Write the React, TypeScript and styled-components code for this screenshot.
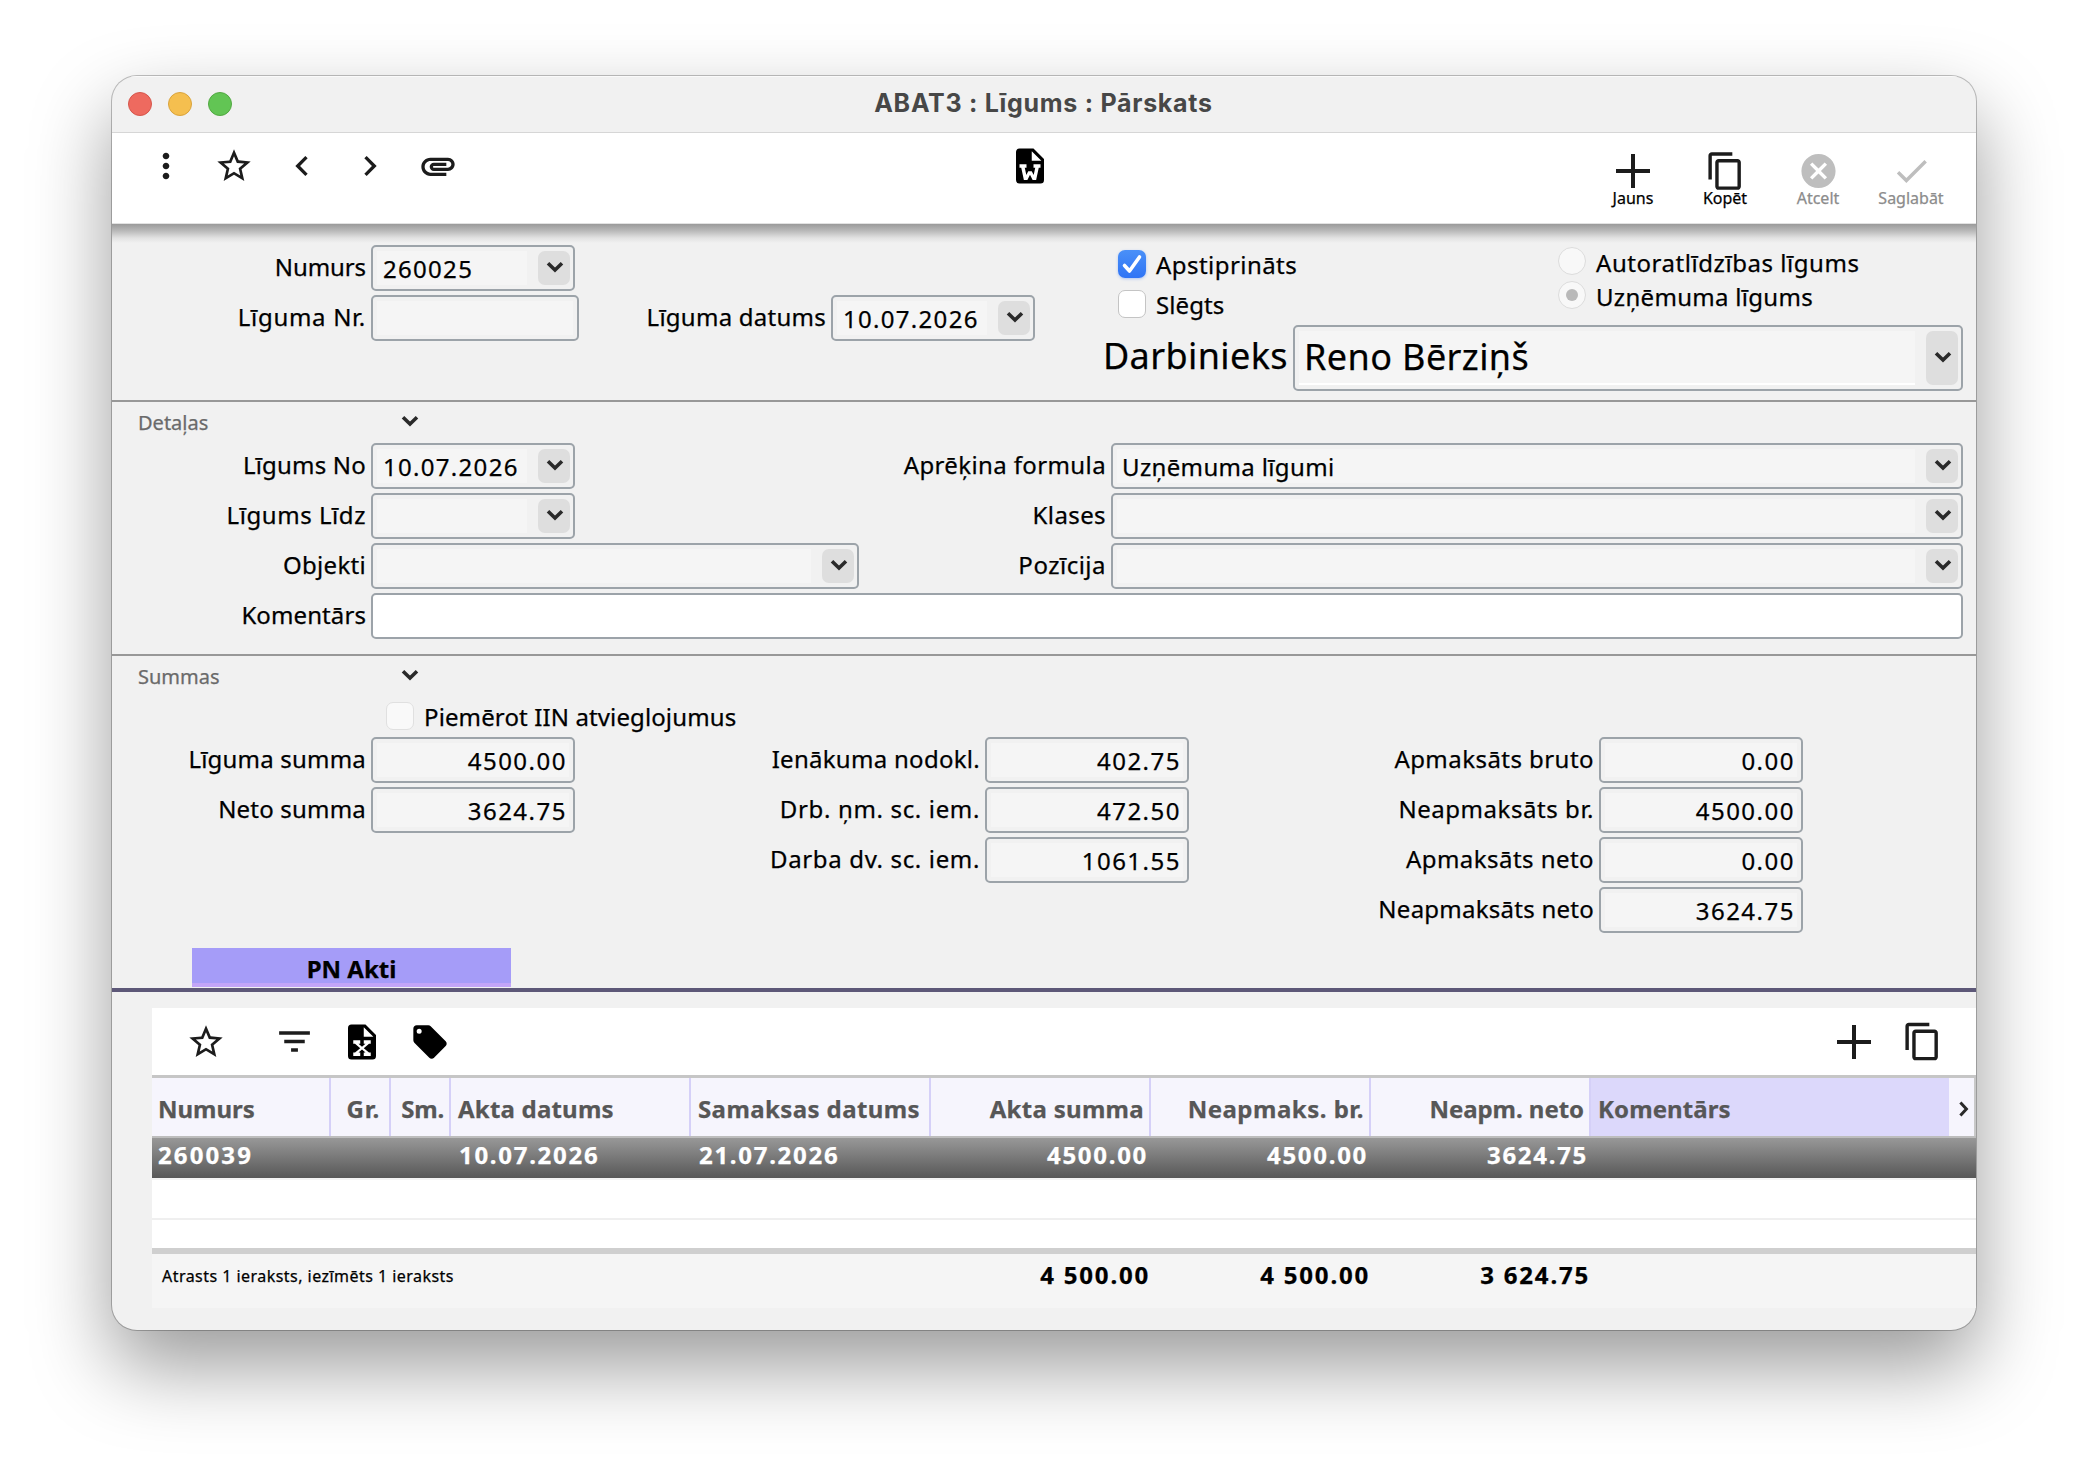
import React from "react";
import styled, { createGlobalStyle, css } from "styled-components";
import {
  MdMoreVert,
  MdStarOutline,
  MdChevronLeft,
  MdChevronRight,
  MdAttachment,
  MdContentCopy,
  MdCancel,
  MdCheck,
  MdFilterList,
} from "react-icons/md";

const Global = createGlobalStyle`
  * { box-sizing: border-box; }
  body {
    margin: 0;
    background: #fff;
    color: #000;
    font-family: "Noto Sans", "Open Sans", sans-serif;
    font-size: 24px;
    -webkit-text-stroke: 0.25px currentColor;
  }
  svg { display: block; }
`;

const Desktop = styled.div`
  width: 2088px;
  height: 1478px;
  padding: 76px 112px 148px;
  overflow: hidden;
`;

const Window = styled.main`
  height: 1254px;
  display: flex;
  flex-direction: column;
  overflow: hidden;
  border-radius: 25px;
  background: #f1f1f1;
  box-shadow: 0 0 0 1px rgba(0, 0, 0, 0.24), 0 36px 80px rgba(0, 0, 0, 0.4);
`;

const TitleBar = styled.header`
  height: 57px;
  flex: none;
  display: grid;
  grid-template-columns: 1fr auto 1fr;
  align-items: center;
  padding: 0 16px;
  border-bottom: 1px solid #d6d6d6;
  box-shadow: inset 0 1px 0 #fafafa;
`;

const Lights = styled.div`
  display: flex;
  gap: 16px;
`;

const Light = styled.span<{ $fill: string; $edge: string }>`
  width: 24px;
  height: 24px;
  border-radius: 50%;
  background: ${(p) => p.$fill};
  border: 1px solid ${(p) => p.$edge};
`;

const Title = styled.h1`
  margin: 0;
  padding: 0 1px 2px 0;
  font: bold 25px/30px Inter, "Liberation Sans", sans-serif;
  letter-spacing: 0.72px;
  color: #474747;
  -webkit-text-stroke: 0;
`;

const Toolbar = styled.nav`
  height: 91px;
  flex: none;
  display: flex;
  background: #fff;
  border-bottom: 1px solid #e2e2e2;
`;

const ToolGroup = styled.div<{ $left: number; $top?: number }>`
  display: flex;
  gap: 28px;
  padding: ${(p) => p.$top ?? 13}px 0 0 ${(p) => p.$left}px;
  color: #1c1c1c;
`;

const Actions = styled.div`
  display: flex;
  align-items: flex-start;
  margin-left: auto;
  padding: 17px 19px 0 0;
`;

const Action = styled.button<{ $off?: boolean; $width: number }>`
  width: ${(p) => p.$width}px;
  padding: 0;
  border: 0;
  background: none;
  display: flex;
  flex-direction: column;
  align-items: center;
  font: 16px/20px "Noto Sans", sans-serif;
  color: ${(p) => (p.$off ? "#8c8c8c" : "#000")};
  svg {
    height: 42px;
    margin-bottom: -4px;
    color: ${(p) => (p.$off ? "#bebebe" : "#1c1c1c")};
  }
`;

const Section = styled.section<{ $height: number; $shaded?: boolean }>`
  height: ${(p) => p.$height}px;
  flex: none;
  border-bottom: ${(p) => (p.$shaded === undefined ? "0" : "2px solid #989898")};
  ${(p) =>
    p.$shaded &&
    css`
      background: linear-gradient(#9a9a9a, #bababa 7px, #e2e2e2 14px, #f1f1f1 19px);
      padding-top: 21px;
      display: flex;
    `}
`;

const Stack = styled.div`
  display: flex;
  flex-direction: column;
  gap: 4px;
`;

const Row = styled.div`
  display: flex;
`;

const Label = styled.label<{ $width: number; $ls?: number }>`
  width: ${(p) => p.$width}px;
  height: 46px;
  line-height: 43px;
  padding-right: 5px;
  text-align: right;
  white-space: nowrap;
  letter-spacing: ${(p) => p.$ls ?? 0.1}px;
`;

const FieldBox = styled.div<{ $width: number; $tall?: boolean; $white?: boolean }>`
  width: ${(p) => p.$width}px;
  height: ${(p) => (p.$tall ? 66 : 46)}px;
  display: flex;
  gap: 11px;
  padding: 4px;
  border: 2px solid #9ca3a9;
  border-radius: 5px;
  background: ${(p) => (p.$white ? "#fff" : "#f1f1f1")};
`;

const Value = styled.div<{ $right?: boolean; $tall?: boolean; $white?: boolean; $ls: number }>`
  flex: 1;
  overflow: hidden;
  padding: 0 ${(p) => (p.$right ? 2 : p.$ls < 1 ? 5 : 6)}px;
  text-align: ${(p) => (p.$right ? "right" : "left")};
  background: ${(p) => (p.$white ? "#fff" : "#f5f5f5")};
  border-bottom: ${(p) => (p.$tall ? "2px solid #fff" : "0")};
  white-space: nowrap;
  font-size: ${(p) => (p.$tall ? 36 : 24)}px;
  line-height: ${(p) => (p.$tall ? 52 : 36)}px;
  letter-spacing: ${(p) => p.$ls}px;
`;

const DropButton = styled.span`
  width: 32px;
  flex: none;
  display: flex;
  align-items: center;
  justify-content: center;
  border-radius: 7px;
  background: #dedede;
  color: #2a2a2a;
  margin-right: -1px;
  padding: 0 0 3px 1px;
`;

const Right = styled.div`
  width: 928px;
  display: flex;
  flex-direction: column;
`;

const Options = styled.div`
  height: 80px;
  display: flex;
  padding-left: 83px;
`;

const OptionList = styled.div<{ $width?: number; $gap: number; $top: number }>`
  width: ${(p) => (p.$width ? p.$width + "px" : "auto")};
  display: flex;
  flex-direction: column;
  gap: ${(p) => p.$gap}px;
  padding-top: ${(p) => p.$top}px;
`;

const Option = styled.label<{ $ls?: number; $line?: number }>`
  height: 28px;
  display: flex;
  gap: 10px;
  line-height: ${(p) => p.$line ?? 30}px;
  white-space: nowrap;
  letter-spacing: ${(p) => p.$ls ?? 0}px;
`;

const Check = styled.span<{ $on?: boolean; $dim?: boolean }>`
  width: 28px;
  height: 28px;
  border-radius: 7px;
  display: flex;
  align-items: center;
  justify-content: center;
  background: ${(p) => (p.$on ? "linear-gradient(#4a90f8, #2f74f5)" : p.$dim ? "#f9f9f9" : "#fff")};
  border: ${(p) => (p.$on ? "0" : p.$dim ? "1px solid #e0e0e0" : "1px solid #c4c4c4")};
  box-shadow: ${(p) => (p.$on ? "0 1px 3px rgba(47,116,245,.35)" : "none")};
`;

const Radio = styled.span`
  width: 28px;
  height: 28px;
  border-radius: 50%;
  display: flex;
  align-items: center;
  justify-content: center;
  background: #f8f8f8;
  border: 1px solid #dcdcdc;
`;

const RadioDot = styled.i`
  width: 12px;
  height: 12px;
  border-radius: 50%;
  background: #b9b9b9;
`;

const BigLabel = styled.label`
  width: 258px;
  padding-right: 5px;
  text-align: right;
  font-size: 36px;
  line-height: 61px;
  letter-spacing: 0.4px;
`;

const GroupHeader = styled.div`
  height: 41px;
  display: flex;
  align-items: center;
  padding-left: 26px;
  font-size: 20px;
  color: #6a6a6a;
  svg { color: #2a2a2a; margin-top: -3px; }
`;

const GroupName = styled.span`
  width: 263px;
`;

const CheckLine = styled.div`
  height: 40px;
  padding: 5px 0 0 274px;
`;

const TabStrip = styled.div`
  height: 44px;
  flex: none;
  padding-left: 80px;
  border-bottom: 4px solid #5d5878;
`;

const Tab = styled.div`
  width: 319px;
  height: 39px;
  border-bottom: 4px solid #c2a5f8;
  background: #a59cf8;
  text-align: center;
  font-weight: bold;
  line-height: 42px;
`;

const Matrix = styled.section`
  flex: none;
  margin: 16px 0 22px 40px;
  height: 300px;
  background: #fff;
`;

const MatrixTools = styled.div`
  height: 70px;
  display: flex;
  align-items: center;
  padding: 0 33px 0 34px;
  border-bottom: 3px solid #c6c6c6;
  color: #1c1c1c;
`;

const Tool = styled.span<{ $gap?: number; $dark?: boolean }>`
  margin-left: ${(p) => p.$gap ?? 0}px;
  color: ${(p) => (p.$dark ? "#000" : "inherit")};
`;

const Spacer = styled.span`
  flex: 1;
`;

const grid = css`
  display: grid;
  grid-template-columns: 179px 60px 60px 240px 240px 220px 220px 220px 358px 27px;
`;

const HeadRow = styled.div`
  ${grid}
  height: 60px;
  border-bottom: 2px solid #bdbdbd;
  font-weight: bold;
  color: #575757;
`;

const HeadCell = styled.div<{ $right?: boolean; $active?: boolean; $ls?: number; $pad?: number }>`
  padding: 0 ${(p) => p.$pad ?? 5}px 0 7px;
  line-height: 61px;
  overflow: hidden;
  white-space: nowrap;
  text-align: ${(p) => (p.$right ? "right" : "left")};
  background: ${(p) => (p.$active ? "#dcd8fb" : "#f6f5fd")};
  border-right: 2px solid ${(p) => (p.$active ? "#dcd8fb" : "#d5d0f8")};
  letter-spacing: ${(p) => p.$ls ?? 0}px;
  &:first-child { padding-left: 6px; }
`;

const MoreCell = styled.div`
  display: flex;
  align-items: center;
  justify-content: center;
  padding: 3px 0 0 3px;
  background: #f6f5fd;
  color: #2a2a2a;
  border-right: 2px solid #c8c8c8;
`;

const SelectedRow = styled.div`
  ${grid}
  height: 42px;
  border-bottom: 2px solid #f3f3f3;
  background: linear-gradient(#989898, #575757);
  background-clip: padding-box;
  color: #fff;
  font-weight: bold;
  line-height: 33px;
`;

const Cell = styled.div<{ $right?: boolean }>`
  padding: 0 3px 0 8px;
  white-space: nowrap;
  text-align: ${(p) => (p.$right ? "right" : "left")};
  letter-spacing: 1.7px;
  &:first-child { padding-left: 6px; letter-spacing: 2.1px; }
`;

const EmptyRow = styled.div<{ $height: number; $last?: boolean }>`
  height: ${(p) => p.$height}px;
  border-bottom: ${(p) => (p.$last ? "6px solid #cfcfcf" : "2px solid #efefef")};
`;

const Totals = styled.div`
  display: grid;
  grid-template-columns: 778px 220px 220px 220px 1fr;
  height: 54px;
  background: #f5f5f5;
  font-weight: bold;
  line-height: 41px;
`;

const Note = styled.span`
  padding-left: 10px;
  font-size: 16px;
  font-weight: normal;
  line-height: 45px;
  letter-spacing: 0.46px;
`;

const Total = styled.span`
  text-align: right;
  letter-spacing: 1.8px;
`;

const ChevronDown = () => (
  <svg width="18" height="12" viewBox="0 0 18 12">
    <path d="M2 2.2L9 9L16 2.2" stroke="currentColor" strokeWidth="3.6" fill="none" />
  </svg>
);

const SmallChevronRight = () => (
  <svg width="11" height="18" viewBox="0 0 11 18">
    <path d="M2.4 2.5L8.4 9L2.4 15.5" stroke="currentColor" strokeWidth="3" fill="none" />
  </svg>
);

const PlusIcon = () => (
  <svg width="40" height="42" viewBox="0 0 40 42">
    <path d="M20 4V38M3 21H37" stroke="currentColor" strokeWidth="4" fill="none" />
  </svg>
);

const WordIcon = () => (
  <svg width="42" height="42" viewBox="0 0 24 24" fill="currentColor">
    <path d="M6,2H14L20,8V20A2,2 0 0,1 18,22H6A2,2 0 0,1 4,20V4A2,2 0 0,1 6,2M13,3.5V9H18.5L13,3.5M7,13L8.5,20H10.5L12,17L13.5,20H15.5L17,13H18V11H14V13H15L14.1,17.2L13,15V15H11V15L9.9,17.2L9,13H10V11H6V13H7Z" />
  </svg>
);

const ExcelIcon = () => (
  <svg width="42" height="42" viewBox="0 0 24 24" fill="currentColor">
    <path d="M6,2H14L20,8V20A2,2 0 0,1 18,22H6A2,2 0 0,1 4,20V4A2,2 0 0,1 6,2M13,3.5V9H18.5L13,3.5M17,11H13V13H14L12,14.67L10,13H11V11H7V13H8L11,15.5L8,18H7V20H11V18H10L12,16.33L14,18H13V20H17V18H16L13,15.5L16,13H17V11Z" />
  </svg>
);

const TagIcon = () => (
  <svg width="40" height="40" viewBox="0 0 24 24" fill="currentColor">
    <path d="M5.5,7A1.5,1.5 0 0,1 4,5.5A1.5,1.5 0 0,1 5.5,4A1.5,1.5 0 0,1 7,5.5A1.5,1.5 0 0,1 5.5,7M21.41,11.58L12.41,2.58C12.05,2.22 11.55,2 11,2H4C2.89,2 2,2.89 2,4V11C2,11.55 2.22,12.05 2.59,12.41L11.58,21.41C11.95,21.77 12.45,22 13,22C13.55,22 14.05,21.77 14.41,21.41L21.41,14.41C21.78,14.05 22,13.55 22,13C22,12.44 21.77,11.94 21.41,11.58Z" />
  </svg>
);

const TickIcon = () => (
  <svg width="28" height="28" viewBox="0 0 28 28">
    <path
      d="M6.5 15.5L11.5 21L21.5 7"
      fill="none"
      stroke="#fff"
      strokeWidth="3.6"
      strokeLinecap="round"
      strokeLinejoin="round"
    />
  </svg>
);

const Field = ({
  width,
  value = "",
  drop,
  right,
  tall,
  white,
  ls = 1.3,
}: {
  width: number;
  value?: string;
  drop?: boolean;
  right?: boolean;
  tall?: boolean;
  white?: boolean;
  ls?: number;
}) => (
  <FieldBox $width={width} $tall={tall} $white={white}>
    <Value $right={right} $tall={tall} $white={white} $ls={ls}>
      {value}
    </Value>
    {drop && (
      <DropButton>
        <ChevronDown />
      </DropButton>
    )}
  </FieldBox>
);

type SumRow = [label: string, value: string, ls: number];

const sumColumns: { width: number; rows: SumRow[] }[] = [
  { width: 259, rows: [["Līguma summa", "4500.00", 0.2], ["Neto summa", "3624.75", 0.2]] },
  {
    width: 410,
    rows: [
      ["Ienākuma nodokl.", "402.75", 0.28],
      ["Drb. ņm. sc. iem.", "472.50", 0.65],
      ["Darba dv. sc. iem.", "1061.55", 0.65],
    ],
  },
  {
    width: 410,
    rows: [
      ["Apmaksāts bruto", "0.00", 0.45],
      ["Neapmaksāts br.", "4500.00", 0.55],
      ["Apmaksāts neto", "0.00", 0.45],
      ["Neapmaksāts neto", "3624.75", 0.25],
    ],
  },
];

export default function App() {
  return (
    <Desktop>
      <Global />
      <Window>
        <TitleBar>
          <Lights>
            <Light $fill="#ee6a5f" $edge="#d5564c" />
            <Light $fill="#f5bf4f" $edge="#d9a33c" />
            <Light $fill="#62c554" $edge="#52a842" />
          </Lights>
          <Title>ABAT3 : Līgums : Pārskats</Title>
        </TitleBar>

        <Toolbar>
          <ToolGroup $left={34}>
            <MdMoreVert size={40} />
            <MdStarOutline size={40} />
            <MdChevronLeft size={40} />
            <MdChevronRight size={40} />
            <MdAttachment size={40} />
          </ToolGroup>
          <ToolGroup $left={551} $top={12}>
            <Tool $dark>
              <WordIcon />
            </Tool>
          </ToolGroup>
          <Actions>
            <Action $width={92}>
              <PlusIcon />
              Jauns
            </Action>
            <Action $width={92}>
              <MdContentCopy size={41} />
              Kopēt
            </Action>
            <Action $width={94} $off>
              <MdCancel size={41} />
              Atcelt
            </Action>
            <Action $width={92} $off>
              <MdCheck size={41} />
              Saglabāt
            </Action>
          </Actions>
        </Toolbar>

        <Section $height={178} $shaded>
          <Stack>
            <Row>
              <Label $width={259} $ls={-0.1}>Numurs</Label>
              <Field width={204} value="260025" drop />
            </Row>
            <Row>
              <Label $width={259} $ls={0.7}>Līguma Nr.</Label>
              <Field width={208} />
              <Label $width={252} $ls={0.25}>Līguma datums</Label>
              <Field width={204} value="10.07.2026" drop />
            </Row>
          </Stack>
          <Right>
            <Options>
              <OptionList $width={440} $gap={12} $top={5}>
                <Option $ls={0.45}>
                  <Check $on>
                    <TickIcon />
                  </Check>
                  Apstiprināts
                </Option>
                <Option $ls={0.1}>
                  <Check />
                  Slēgts
                </Option>
              </OptionList>
              <OptionList $gap={6} $top={2}>
                <Option $ls={0.55} $line={32}>
                  <Radio />
                  Autoratlīdzības līgums
                </Option>
                <Option $ls={0.3} $line={32}>
                  <Radio>
                    <RadioDot />
                  </Radio>
                  Uzņēmuma līgums
                </Option>
              </OptionList>
            </Options>
            <Row>
              <BigLabel>Darbinieks</BigLabel>
              <Field width={670} value="Reno Bērziņš" drop tall ls={0.4} />
            </Row>
          </Right>
        </Section>

        <Section $height={254} $shaded={false}>
          <GroupHeader>
            <GroupName>Detaļas</GroupName>
            <ChevronDown />
          </GroupHeader>
          <Stack>
            <Row>
              <Label $width={259} $ls={0.2}>Līgums No</Label>
              <Field width={204} value="10.07.2026" drop />
              <Label $width={536} $ls={0.38}>Aprēķina formula</Label>
              <Field width={852} value="Uzņēmuma līgumi" drop ls={0.35} />
            </Row>
            <Row>
              <Label $width={259} $ls={0.55}>Līgums Līdz</Label>
              <Field width={204} drop />
              <Label $width={536} $ls={0.4}>Klases</Label>
              <Field width={852} drop />
            </Row>
            <Row>
              <Label $width={259} $ls={0.3}>Objekti</Label>
              <Field width={488} drop />
              <Label $width={252} $ls={0.5}>Pozīcija</Label>
              <Field width={852} drop />
            </Row>
            <Row>
              <Label $width={259}>Komentārs</Label>
              <Field width={1592} white />
            </Row>
          </Stack>
        </Section>

        <Section $height={292}>
          <GroupHeader>
            <GroupName>Summas</GroupName>
            <ChevronDown />
          </GroupHeader>
          <CheckLine>
            <Option $ls={0.12}>
              <Check $dim />
              Piemērot IIN atvieglojumus
            </Option>
          </CheckLine>
          <Row>
            {sumColumns.map((col, i) => (
              <Stack key={i}>
                {col.rows.map(([label, value, ls]) => (
                  <Row key={label}>
                    <Label $width={col.width} $ls={ls}>{label}</Label>
                    <Field width={204} value={value} right ls={1.5} />
                  </Row>
                ))}
              </Stack>
            ))}
          </Row>
        </Section>

        <TabStrip>
          <Tab>PN Akti</Tab>
        </TabStrip>

        <Matrix>
          <MatrixTools>
            <Tool>
              <MdStarOutline size={40} />
            </Tool>
            <Tool $gap={48}>
              <MdFilterList size={41} />
            </Tool>
            <Tool $gap={26} $dark>
              <ExcelIcon />
            </Tool>
            <Tool $gap={27} $dark>
              <TagIcon />
            </Tool>
            <Spacer />
            <Tool>
              <PlusIcon />
            </Tool>
            <Tool $gap={28}>
              <MdContentCopy size={41} />
            </Tool>
          </MatrixTools>
          <HeadRow>
            <HeadCell>Numurs</HeadCell>
            <HeadCell $right $ls={0.8} $pad={9}>Gr.</HeadCell>
            <HeadCell $right $ls={-0.2}>Sm.</HeadCell>
            <HeadCell $ls={0.2}>Akta datums</HeadCell>
            <HeadCell $ls={0.4}>Samaksas datums</HeadCell>
            <HeadCell $right $ls={0.3}>Akta summa</HeadCell>
            <HeadCell $right $ls={0.5}>Neapmaks. br.</HeadCell>
            <HeadCell $right $ls={-0.05}>Neapm. neto</HeadCell>
            <HeadCell $active $ls={0.1}>Komentārs</HeadCell>
            <MoreCell>
              <SmallChevronRight />
            </MoreCell>
          </HeadRow>
          <SelectedRow>
            <Cell>260039</Cell>
            <Cell />
            <Cell />
            <Cell>10.07.2026</Cell>
            <Cell>21.07.2026</Cell>
            <Cell $right>4500.00</Cell>
            <Cell $right>4500.00</Cell>
            <Cell $right>3624.75</Cell>
          </SelectedRow>
          <EmptyRow $height={40} />
          <EmptyRow $height={34} $last />
          <Totals>
            <Note>Atrasts 1 ieraksts, iezīmēts 1 ieraksts</Note>
            <Total>4 500.00</Total>
            <Total>4 500.00</Total>
            <Total>3 624.75</Total>
          </Totals>
        </Matrix>
      </Window>
    </Desktop>
  );
}
